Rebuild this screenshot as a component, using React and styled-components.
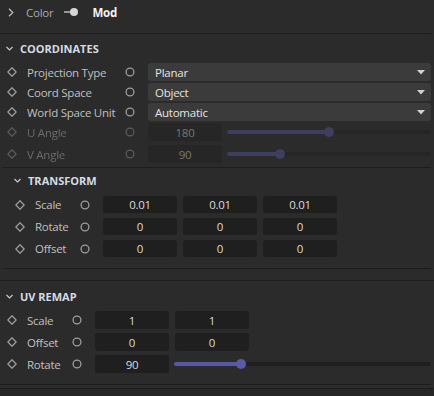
import styled, { createGlobalStyle } from "styled-components";

const Global = createGlobalStyle`
  html, body {
    margin: 0;
    padding: 0;
    background: #2b2b2b;
  }
  body {
    font-family: "Open Sans", "Noto Sans", sans-serif;
    font-size: 11.5px;
    letter-spacing: -0.25px;
    color: #bdbdbd;
  }
`;

const Panel = styled.div`
  width: 434px;
  height: 396px;
  overflow: hidden;
  background: #2b2b2b;
`;

const TopBar = styled.div`
  display: flex;
  align-items: center;
  height: 24px;
  padding-left: 8px;
  margin-bottom: 9px;
`;

const TopLabel = styled.span`
  color: #a9a9a9;
  margin-left: 12px;
  margin-right: 11px;
`;

const ModLabel = styled.span`
  color: #f2f2f2;
  font-weight: 700;
  margin-left: 14px;
`;

const Divider = styled.div`
  height: 1px;
  background: #1d1d1d;
  margin: ${(p) => p.$m || "0 3px 0 0"};
`;

const Header = styled.div`
  box-sizing: border-box;
  display: flex;
  align-items: center;
  height: ${(p) => p.$h}px;
  padding-left: ${(p) => p.$indent}px;
  padding-bottom: ${(p) => p.$pb || 0}px;
  color: #d4dbe4;
  font-weight: 700;
  font-size: 11px;
  letter-spacing: 0;
  gap: 7px;
`;

const Rows = styled.div`
  display: flex;
  flex-direction: column;
  gap: ${(p) => p.$gap}px;
  padding-right: 3px;
`;

const Row = styled.div`
  display: flex;
  align-items: center;
  height: ${(p) => p.$h || 18}px;
  padding-left: ${(p) => p.$indent}px;
  opacity: ${(p) => (p.$dim ? 0.42 : 1)};
`;

const KeyBox = styled.span`
  width: 14px;
  display: flex;
  justify-content: center;
  margin-right: 8px;
`;

const Label = styled.span`
  width: ${(p) => p.$w}px;
  white-space: nowrap;
  color: #c0c0c0;
`;

const Anim = styled.span`
  width: 18px;
  display: flex;
  justify-content: center;
  margin-right: 9px;
`;

const Controls = styled.div`
  flex: 1;
  display: flex;
  align-items: center;
  gap: 6px;
  height: 100%;
`;

const Dropdown = styled.div`
  flex: 1;
  height: 100%;
  display: flex;
  align-items: center;
  justify-content: space-between;
  padding: 0 6px 0 7px;
  border-radius: 3px;
  background: #3b3b3b;
  color: #e4e4e4;
`;

const NumBox = styled.div`
  width: 74px;
  flex: none;
  height: 100%;
  display: flex;
  align-items: center;
  justify-content: center;
  border-radius: 3px;
  background: #1f1f1f;
  color: #dadada;
`;

const Track = styled.div`
  flex: 1;
  height: 4px;
  border-radius: 2px;
  background: #1f1f1f;
  position: relative;
  margin-left: -1px;
`;

const Fill = styled.div`
  height: 100%;
  border-radius: 2px;
  background: #5858a4;
`;

const Thumb = styled.span`
  position: absolute;
  top: 50%;
  width: 10px;
  height: 10px;
  margin: -5px 0 0 -5px;
  border-radius: 50%;
  background: #5a5aa8;
`;

const Footer = styled.div`
  margin-top: 11px;
`;

const FooterBar = styled.div`
  margin-top: 3px;
  height: 10px;
  border-top: 1px solid #1d1d1d;
  background: #262626;
`;

const Diamond = () => (
  <svg width="10" height="10" viewBox="0 0 10 10">
    <path d="M5 0.8 L9.2 5 L5 9.2 L0.8 5 Z" fill="none" stroke="#9e9e9e" strokeWidth="1.3" />
  </svg>
);

const Ring = () => (
  <svg width="10" height="10" viewBox="0 0 10 10">
    <circle cx="5" cy="5" r="3.9" fill="none" stroke="#9e9e9e" strokeWidth="1.3" />
  </svg>
);

const ChevronDown = () => (
  <svg width="7" height="5" viewBox="0 0 7 5">
    <path d="M0.5 1 L3.5 4 L6.5 1" fill="none" stroke="#c8d0da" strokeWidth="1.1" />
  </svg>
);

const ChevronRight = () => (
  <svg width="6" height="9" viewBox="0 0 6 9">
    <path d="M1 0.8 L4.8 4.5 L1 8.2" fill="none" stroke="#bdbdbd" strokeWidth="1.2" />
  </svg>
);

const Toggle = () => (
  <svg width="14" height="10" viewBox="0 0 14 10">
    <line x1="0" y1="5" x2="7" y2="5" stroke="#bdbdbd" strokeWidth="1.5" />
    <circle cx="10" cy="5" r="4" fill="#d6d6d6" />
  </svg>
);

const Caret = () => (
  <svg width="8" height="5" viewBox="0 0 8 5">
    <path d="M0 0 L8 0 L4 4.5 Z" fill="#cfcfcf" />
  </svg>
);

const Slider = ({ pct }) => (
  <Track>
    <Fill style={{ width: `${pct}%` }} />
    <Thumb style={{ left: `${pct}%` }} />
  </Track>
);

const Param = ({ indent, labelW, label, dim, h, children }) => (
  <Row $indent={indent} $dim={dim} $h={h}>
    <KeyBox><Diamond /></KeyBox>
    <Label $w={labelW}>{label}</Label>
    <Anim><Ring /></Anim>
    <Controls>{children}</Controls>
  </Row>
);

const Select = ({ value }) => (
  <Dropdown>
    <span>{value}</span>
    <Caret />
  </Dropdown>
);

export default function App() {
  return (
    <Panel>
      <Global />
      <TopBar>
        <ChevronRight />
        <TopLabel>Color</TopLabel>
        <Toggle />
        <ModLabel>Mod</ModLabel>
      </TopBar>
      <Divider />

      <Header $h={29} $indent={6}>
        <ChevronDown />
        COORDINATES
      </Header>
      <Rows $gap={2}>
        <Param indent={5} labelW={94} label="Projection Type">
          <Select value="Planar" />
        </Param>
        <Param indent={5} labelW={94} label="Coord Space">
          <Select value="Object" />
        </Param>
        <Param indent={5} labelW={94} label="World Space Unit">
          <Select value="Automatic" />
        </Param>
      </Rows>
      <Rows $gap={4} style={{ marginTop: 2 }}>
        <Param indent={5} labelW={94} label="U Angle" dim>
          <NumBox>180</NumBox>
          <Slider pct={50} />
        </Param>
        <Param indent={5} labelW={94} label="V Angle" dim>
          <NumBox>90</NumBox>
          <Slider pct={26} />
        </Param>
      </Rows>
      <Divider $m="4px 3px 0 3px" />

      <Header $h={28} $pb={4} $indent={14}>
        <ChevronDown />
        TRANSFORM
      </Header>
      <Rows $gap={5}>
        <Param indent={13} labelW={41} label="Scale" h={17}>
          <NumBox>0.01</NumBox>
          <NumBox>0.01</NumBox>
          <NumBox>0.01</NumBox>
        </Param>
        <Param indent={13} labelW={41} label="Rotate" h={17}>
          <NumBox>0</NumBox>
          <NumBox>0</NumBox>
          <NumBox>0</NumBox>
        </Param>
        <Param indent={13} labelW={41} label="Offset" h={17}>
          <NumBox>0</NumBox>
          <NumBox>0</NumBox>
          <NumBox>0</NumBox>
        </Param>
      </Rows>
      <Divider $m="11px 3px 0 3px" />
      <Divider $m="11px 0 0 0" />

      <Header $h={30} $indent={6}>
        <ChevronDown />
        UV REMAP
      </Header>
      <Rows $gap={4}>
        <Param indent={5} labelW={41} label="Scale">
          <NumBox>1</NumBox>
          <NumBox>1</NumBox>
        </Param>
        <Param indent={5} labelW={41} label="Offset">
          <NumBox>0</NumBox>
          <NumBox>0</NumBox>
        </Param>
        <Param indent={5} labelW={41} label="Rotate">
          <NumBox>90</NumBox>
          <Slider pct={26} />
        </Param>
      </Rows>
      <Footer>
        <Divider />
        <FooterBar />
      </Footer>
    </Panel>
  );
}
